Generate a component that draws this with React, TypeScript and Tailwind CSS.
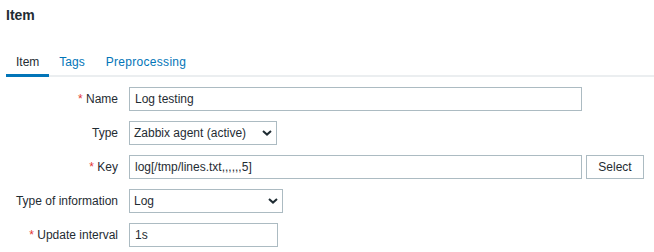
const font = { fontFamily: '"Liberation Sans", Arial, sans-serif' };

const Chevron = () => (
  <svg width="10" height="6" viewBox="0 0 10 6" className="shrink-0">
    <path d="M1 1 L5 4.6 L9 1" fill="none" stroke="#1f2c33" strokeWidth="2" />
  </svg>
);

const Label = ({ text, required }: { text: string; required?: boolean }) => (
  <div className="w-[112px] shrink-0 text-right">
    {required && <span className="text-[#e33734]">* </span>}
    {text}
  </div>
);

const TextBox = ({ value, width }: { value: string; width: string }) => (
  <div className={`${width} h-[24px] border border-[#acbbc2] bg-white px-[5px] flex items-center`}>{value}</div>
);

const SelectBox = ({ value, width }: { value: string; width: string }) => (
  <div className={`${width} h-[24px] border border-[#acbbc2] bg-white pl-[4px] pr-[4px] flex items-center justify-between`}>
    <span>{value}</span>
    <Chevron />
  </div>
);

const App = () => {
  return (
    <div className="w-[654px] h-[252px] bg-white text-[12px] text-[#1f2c33] overflow-hidden" style={font}>
      {/* Header */}
      <div className="pl-[6px] pt-[6px] text-[14px] leading-[18px] font-bold">Item</div>

      {/* Tabs */}
      <nav className="mt-[21px] ml-[6px] flex border-b-2 border-[#ebeef0]">
        <div className="pt-[8px] pb-[3px] px-[10px] leading-[18px] border-b-[3px] border-[#0275b8] -mb-[2px]">Item</div>
        <div className="pt-[8px] pb-[3px] pl-[10px] pr-[11px] leading-[18px] text-[#0275b8]">Tags</div>
        <div className="pt-[8px] pb-[3px] px-[10px] leading-[18px] text-[#0275b8] tracking-[0.3px]">Preprocessing</div>
      </nav>

      {/* Form */}
      <div className="mt-[10px] pl-[6px] flex flex-col gap-[10px]">
        <div className="flex items-center gap-[11px]">
          <Label text="Name" required />
          <TextBox value="Log testing" width="w-[453px]" />
        </div>
        <div className="flex items-center gap-[11px]">
          <Label text="Type" />
          <SelectBox value="Zabbix agent (active)" width="w-[148px]" />
        </div>
        <div className="flex items-center gap-[11px]">
          <Label text="Key" required />
          <div className="flex items-center gap-[4px]">
            <TextBox value="log[/tmp/lines.txt,,,,,,5]" width="w-[453px]" />
            <button className="w-[58px] h-[24px] border border-[#acbbc2] bg-white text-[#1f2c33]">Select</button>
          </div>
        </div>
        <div className="flex items-center gap-[11px]">
          <Label text="Type of information" />
          <SelectBox value="Log" width="w-[154px]" />
        </div>
        <div className="flex items-center gap-[11px]">
          <Label text="Update interval" required />
          <TextBox value="1s" width="w-[149px]" />
        </div>
      </div>
    </div>
  );
};

export default App;
